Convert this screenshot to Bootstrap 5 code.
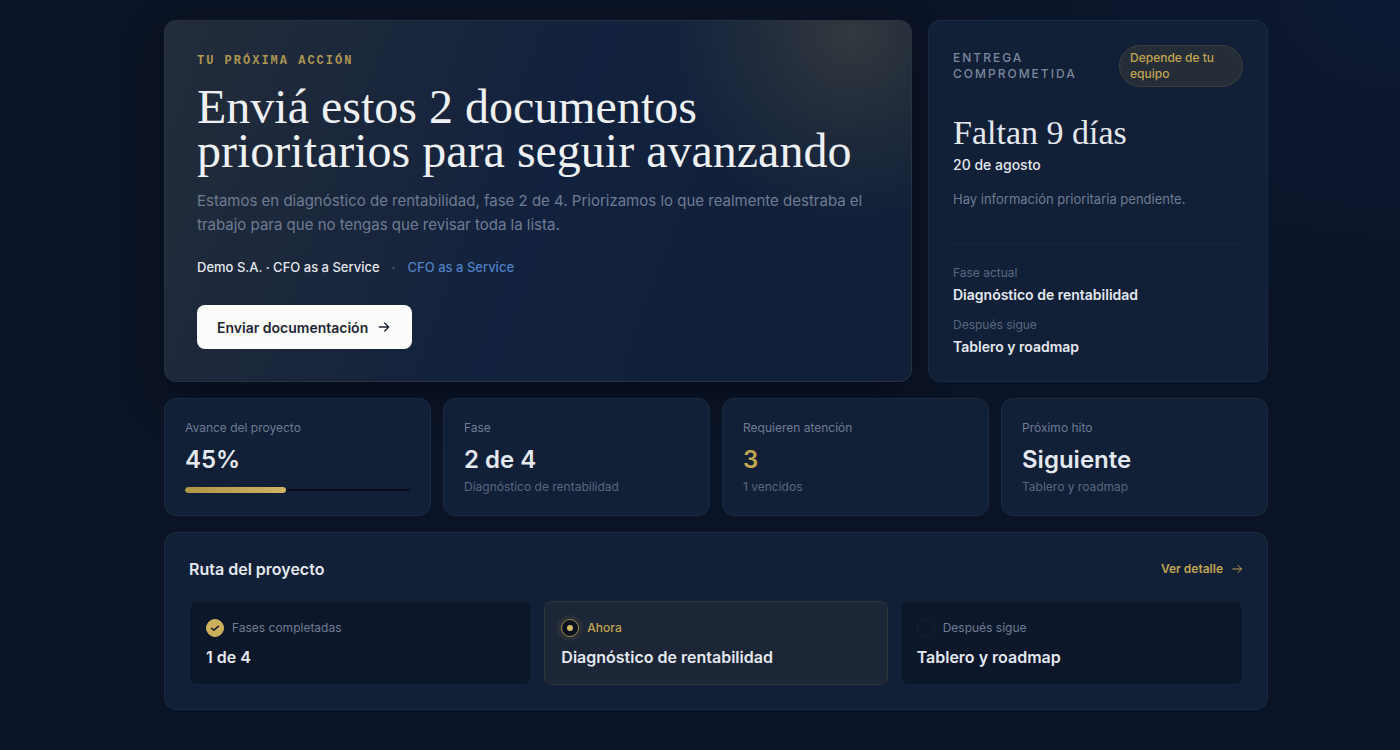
<!DOCTYPE html>
<html lang="es">
<head>
<meta charset="utf-8">
<meta name="viewport" content="width=device-width, initial-scale=1">
<title>Panel del proyecto</title>
<link href="https://cdn.jsdelivr.net/npm/bootstrap@5.3.0/dist/css/bootstrap.min.css" rel="stylesheet">
<style>
  :root {
    --gold: #c3a550;
    --ink: #e4e8ef;
    --muted: #6f7c93;
    --dim: #5a6780;
    --panel: #111f37;
    --line: #1a2b41;
    --night: #0d172a;
  }
  body {
    min-height: 100vh;
    color: var(--ink);
    font-family: Inter, "Liberation Sans", sans-serif;
    font-size: 14px;
    line-height: 20px;
    background: radial-gradient(500px 360px at 100% 0, #0d1933, transparent), #0b1426;
  }
  .board { max-width: 1104px; }
  @media (min-width: 1200px) { body { padding-left: 32px; } }
  a { text-decoration: none; }
  .panel { background: var(--panel); border: 1px solid var(--line); border-radius: 12px; }
  .serif { font-family: "Liberation Serif", serif; font-weight: 400; }
  .fs12 { font-size: 12px; line-height: 16px; }
  .fs13 { font-size: 13px; line-height: 16px; }
  .muted { color: var(--muted); }
  .dim { color: var(--dim); }
  .gold { color: var(--gold); }

  .top-grid { display: grid; gap: 16px; }
  .stat-grid, .step-grid { display: grid; gap: 12px; }
  @media (min-width: 576px) { .stat-grid { grid-template-columns: repeat(2, minmax(0, 1fr)); } }
  @media (min-width: 992px) {
    .top-grid { grid-template-columns: minmax(0, 11fr) minmax(0, 5fr); }
    .stat-grid { grid-template-columns: repeat(4, minmax(0, 1fr)); }
    .step-grid { grid-template-columns: repeat(3, minmax(0, 1fr)); }
  }

  .hero {
    padding: 32px;
    border: 1px solid #29323f;
    border-radius: 12px;
    background:
      radial-gradient(circle 190px at 92% 3%, rgba(201, 169, 79, .18), rgba(201, 169, 79, .08) 50%, transparent),
      linear-gradient(110deg, #222c3b 0%, #1b273b 25%, #12213d 50%, #112038 100%);
    box-shadow: 0 16px 40px rgba(3, 7, 18, .45);
  }
  .eyebrow {
    font: 700 12px/16px "Liberation Mono", monospace;
    letter-spacing: 2px;
    color: #ad9650;
  }
  .hero h1 { font-size: 48px; line-height: 44px; color: #eff1f4; }
  .hero-text { font-size: 15px; line-height: 24px; }
  .hero-meta { font-size: 13px; font-weight: 500; }
  .hero-meta a { color: #5080c6; }
  .btn-send {
    height: 44px; padding: 0 20px;
    border: 0; border-radius: 8px;
    background: #fcfcfa; color: #1c2534;
    font-size: 14px; font-weight: 600;
  }
  .btn-send:hover { background: #fff; color: #1c2534; }

  .caps { font-weight: 500; letter-spacing: 2px; color: #7c889d; }
  .pill {
    flex: 0 0 124px; padding: 4px 10px;
    border: 1px solid #3d3e3b; border-radius: 22px;
    background: #242d38; font-weight: 500;
  }
  .days { font-size: 34px; line-height: 36px; }
  .facts { border-top: 1px solid #182940; padding-top: 20px; }

  .stat { padding: 20px; }
  .stat-label { font-size: 12px; line-height: 18px; }
  .stat-value { font-size: 24px; line-height: 30px; font-weight: 600; }
  .progress { height: 6px; margin-top: 12px; background: transparent; position: relative; border-radius: 3px; }
  .progress::before { content: ""; position: absolute; inset: 2px 0; background: #080e1e; border-radius: 2px; }
  .progress-bar { height: 6px; position: relative; border-radius: 3px; background: linear-gradient(90deg, #b09643, #cdb363); }

  .route { padding: 24px; }
  .route h2 { font-size: 16px; line-height: 24px; font-weight: 600; }
  .step { padding: 16px; border: 1px solid #14243b; border-radius: 8px; background: var(--night); }
  .step-now { background: #1d2636; border-color: #303636; }
  .step-head { min-height: 20px; }
  .step-title { font-size: 16px; line-height: 22px; font-weight: 600; }
  .dot { width: 18px; height: 18px; border-radius: 50%; border: 1px solid #162238; flex: none; }
  .dot-done { background: #cdb05c; border-color: #cdb05c; }
  .dot-now { background: #0a1222; border: 1px solid #a38c49; box-shadow: 0 0 0 4px rgba(201, 169, 79, .07); }
</style>
</head>
<body>
<main class="board mx-auto py-3">
  <section class="top-grid mt-1">
    <article class="hero">
      <p class="eyebrow mb-3">TU PRÓXIMA ACCIÓN</p>
      <h1 class="serif mb-3">Enviá estos 2 documentos prioritarios para seguir avanzando</h1>
      <p class="hero-text muted mb-0">Estamos en diagnóstico de rentabilidad, fase 2 de 4. Priorizamos lo que realmente destraba el trabajo para que no tengas que revisar toda la lista.</p>
      <div class="hero-meta d-flex flex-wrap my-3 py-1">
        <span>Demo S.A. · CFO as a Service</span><span class="dim mx-2 px-1">·</span><a href="#">CFO as a Service</a>
      </div>
      <button type="button" class="btn btn-send d-inline-flex align-items-center gap-2 mt-2">Enviar documentación
        <svg width="16" height="16" viewBox="0 0 24 24" fill="none" stroke="currentColor" stroke-width="2" stroke-linecap="round" stroke-linejoin="round" aria-hidden="true"><path d="M5 12h14M13 6l6 6-6 6"/></svg>
      </button>
    </article>

    <aside class="panel p-4 d-flex flex-column">
      <div class="d-flex justify-content-between align-items-center gap-3 fs12">
        <span class="caps">ENTREGA COMPROMETIDA</span>
        <span class="pill gold">Depende de tu equipo</span>
      </div>
      <p class="serif days mt-4 pt-1 mb-1">Faltan 9 días</p>
      <p class="fw-medium mb-3">20 de agosto</p>
      <p class="muted mb-3 fs13">Hay información prioritaria pendiente.</p>
      <dl class="facts mt-auto mb-0">
        <dt class="fs12 fw-normal dim mb-1">Fase actual</dt>
        <dd class="fw-semibold mb-2 pb-1">Diagnóstico de rentabilidad</dd>
        <dt class="fs12 fw-normal dim mb-1">Después sigue</dt>
        <dd class="fw-semibold mb-0">Tablero y roadmap</dd>
      </dl>
    </aside>
  </section>

  <section class="stat-grid mt-3">
    <article class="panel stat">
      <p class="stat-label muted mb-2">Avance del proyecto</p>
      <p class="stat-value mb-0">45%</p>
      <div class="progress" role="progressbar" aria-label="Avance del proyecto" aria-valuenow="45" aria-valuemin="0" aria-valuemax="100"><div class="progress-bar" style="width:45%"></div></div>
    </article>
    <article class="panel stat">
      <p class="stat-label muted mb-2">Fase</p>
      <p class="stat-value mb-1">2 de 4</p>
      <p class="fs12 dim mb-0">Diagnóstico de rentabilidad</p>
    </article>
    <article class="panel stat">
      <p class="stat-label muted mb-2">Requieren atención</p>
      <p class="stat-value gold mb-1">3</p>
      <p class="fs12 dim mb-0">1 vencidos</p>
    </article>
    <article class="panel stat">
      <p class="stat-label muted mb-2">Próximo hito</p>
      <p class="stat-value mb-1">Siguiente</p>
      <p class="fs12 dim mb-0">Tablero y roadmap</p>
    </article>
  </section>

  <section class="panel route mt-3">
    <div class="d-flex justify-content-between align-items-center mb-3 pb-1">
      <h2 class="mb-0">Ruta del proyecto</h2>
      <a href="#" class="gold fs12 fw-semibold d-inline-flex align-items-center gap-2">Ver detalle
        <svg width="12" height="12" viewBox="0 0 24 24" fill="none" stroke="currentColor" stroke-width="2" stroke-linecap="round" stroke-linejoin="round" aria-hidden="true"><path d="M4 12h17M14 5l7 7-7 7"/></svg>
      </a>
    </div>
    <div class="step-grid">
      <div class="step">
        <div class="step-head d-flex align-items-center gap-2 mb-2 fs12 muted">
          <span class="dot dot-done d-flex align-items-center justify-content-center"><svg width="10" height="10" viewBox="0 0 12 12" fill="none" stroke="#1c2230" stroke-width="2" stroke-linecap="round" stroke-linejoin="round" aria-hidden="true"><path d="M2 6.5 4.5 8.5 10 4"/></svg></span>
          Fases completadas
        </div>
        <div class="step-title">1 de 4</div>
      </div>
      <div class="step step-now">
        <div class="step-head d-flex align-items-center gap-2 mb-2 fs12 gold fw-medium">
          <span class="dot dot-now d-flex align-items-center justify-content-center"><svg width="6" height="6" viewBox="0 0 6 6" aria-hidden="true"><circle cx="3" cy="3" r="3" fill="#d8bb65"/></svg></span>
          Ahora
        </div>
        <div class="step-title">Diagnóstico de rentabilidad</div>
      </div>
      <div class="step">
        <div class="step-head d-flex align-items-center gap-2 mb-2 fs12 muted">
          <span class="dot"></span>
          Después sigue
        </div>
        <div class="step-title">Tablero y roadmap</div>
      </div>
    </div>
  </section>
</main>
<script src="https://cdn.jsdelivr.net/npm/bootstrap@5.3.0/dist/js/bootstrap.bundle.min.js"></script>
</body>
</html>
